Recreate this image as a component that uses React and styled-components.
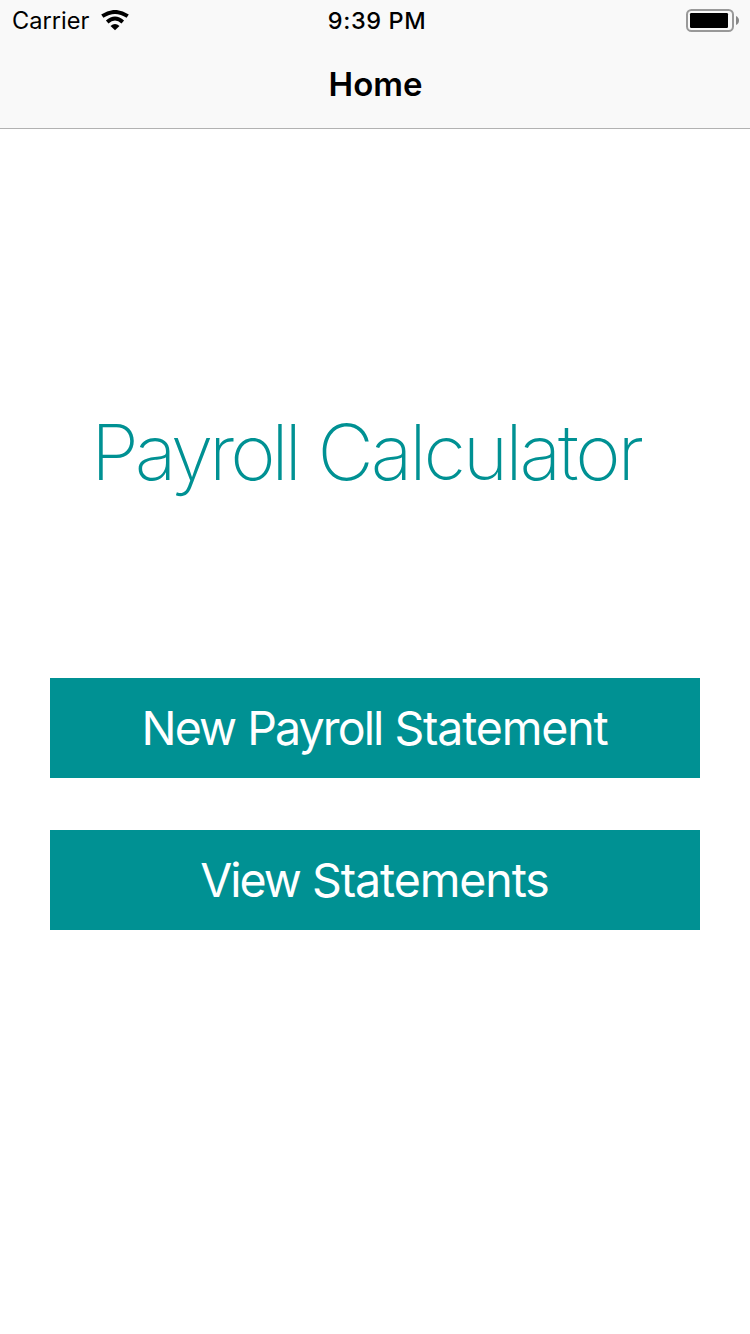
import React from "react";
import styled, { createGlobalStyle } from "styled-components";

const GlobalStyle = createGlobalStyle`
  * { box-sizing: border-box; }
  body { margin: 0; background: #fff; }
`;

const Screen = styled.div`
  display: flex;
  flex-direction: column;
  width: 750px;
  height: 1334px;
  background: #fff;
  color: #000;
  font-family: Inter, "Liberation Sans", sans-serif;
`;

const Header = styled.header`
  height: 129px;
  background: #f9f9f9;
  border-bottom: 1px solid #b2b2b2;
`;

const StatusBar = styled.div`
  display: grid;
  grid-template-columns: 1fr auto 1fr;
  align-items: center;
  height: 42px;
  padding: 0 10px 0 14px;
`;

const Carrier = styled.div`
  display: flex;
  align-items: center;
  gap: 11px;
  margin-left: -2px;
`;

const Label = styled.span`
  font-size: ${(p) => p.$size}px;
  font-weight: ${(p) => p.$weight};
  letter-spacing: ${(p) => p.$tracking || 0}px;
  line-height: 1.2;
  white-space: nowrap;
`;

const Word = styled.span`
  letter-spacing: ${(p) => p.$tracking}px;
`;

const WifiIcon = styled.svg`
  display: block;
`;

const BatteryIcon = styled.svg`
  display: block;
  justify-self: end;
`;

const NavBar = styled.div`
  display: flex;
  align-items: center;
  justify-content: center;
  height: 86px;
  padding-left: 1px;
`;

const Main = styled.main`
  display: flex;
  flex-direction: column;
  padding: 273px 50px 0;
`;

const Title = styled.h1`
  margin: 0;
  height: 276px;
  padding-left: 41px;
  color: #009193;
  font-size: 77.5px;
  font-weight: 220;
  line-height: 100px;
  word-spacing: -2px;
  white-space: nowrap;
`;

const Actions = styled.div`
  display: flex;
  flex-direction: column;
  gap: 52px;
`;

const ActionButton = styled.button`
  display: flex;
  align-items: center;
  justify-content: center;
  height: 100px;
  padding: 2px 1px 0 0;
  border: 0;
  background: #009193;
  color: #fff;
  font-family: inherit;
  word-spacing: -1px;
`;

export default function App() {
  return (
    <Screen>
      <GlobalStyle />
      <Header>
        <StatusBar>
          <Carrier>
            <Label $size={23.6} $weight={400}>Carrier</Label>
            <WifiIcon width="30" height="22" viewBox="0 0 30 22">
              <path d="M15 20.2 L10.5 15.9 Q15 12.1 19.5 15.9 Z" />
              <path d="M7.2 11.9 Q15 5.3 22.8 11.9" fill="none" stroke="#000" strokeWidth="3.9" />
              <path d="M2.3 6.2 Q15 -2.4 27.7 6.2" fill="none" stroke="#000" strokeWidth="3.9" />
            </WifiIcon>
          </Carrier>
          <Label $size={23.5} $weight={500} $tracking={0.6}>9:39 PM</Label>
          <BatteryIcon width="54" height="24" viewBox="0 0 54 24">
            <rect x="1" y="1" width="46" height="21" rx="4.5" fill="none" stroke="#999" strokeWidth="2" />
            <rect x="4" y="4" width="38" height="15" rx="1.2" />
            <path d="M50 7 Q53 8.5 53 11.5 Q53 14.5 50 16 Z" fill="#888" />
          </BatteryIcon>
        </StatusBar>
        <NavBar>
          <Label $size={33} $weight={600}>Home</Label>
        </NavBar>
      </Header>
      <Main>
        <Title>
          <Word $tracking={-4.2}>Payroll</Word> <Word $tracking={-3.1}>Calculator</Word>
        </Title>
        <Actions>
          <ActionButton>
            <Label $size={46.5} $weight={390}>
              <Word $tracking={-1.9}>New</Word> <Word $tracking={-1.9}>Payroll</Word>{" "}
              <Word $tracking={-1.2}>Statement</Word>
            </Label>
          </ActionButton>
          <ActionButton>
            <Label $size={46.5} $weight={390}>
              <Word $tracking={-2}>View</Word> <Word $tracking={-1.1}>Statements</Word>
            </Label>
          </ActionButton>
        </Actions>
      </Main>
    </Screen>
  );
}
